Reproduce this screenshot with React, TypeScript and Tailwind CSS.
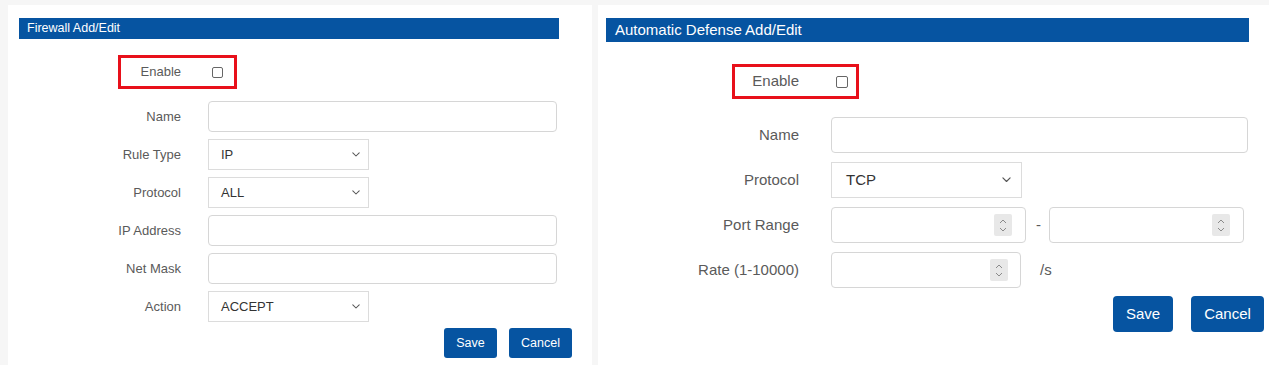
import type { ReactNode } from "react";

const font = { fontFamily: '"Liberation Sans", Arial, sans-serif' };

function Chevron({ size = 8 }: { size?: number }) {
  return (
    <svg width={size} height={size * 0.6} viewBox="0 0 10 6" fill="none">
      <path d="M1 1l4 4 4-4" stroke="#555" strokeWidth="1.3" strokeLinecap="round" strokeLinejoin="round" />
    </svg>
  );
}

function Spinner() {
  return (
    <span className="flex h-[22px] w-[18px] flex-col items-center justify-center gap-[3px] rounded-[2px] bg-[#e8e8e8]">
      <svg width="8" height="5" viewBox="0 0 8 5" fill="none">
        <path d="M1 4l3-3 3 3" stroke="#8a8a8a" strokeWidth="1" />
      </svg>
      <svg width="8" height="5" viewBox="0 0 8 5" fill="none">
        <path d="M1 1l3 3 3-3" stroke="#8a8a8a" strokeWidth="1" />
      </svg>
    </span>
  );
}

function SmallRow({ label, children }: { label: string; children: ReactNode }) {
  return (
    <div className="flex h-[31px] items-center">
      <div className="w-[162px] text-right text-[13px] text-[#5a5a5a]">{label}</div>
      <div className="ml-[27px] flex h-full items-center">{children}</div>
    </div>
  );
}

function BigRow({ label, children }: { label: string; children: ReactNode }) {
  return (
    <div className="flex h-[36px] items-center">
      <div className="w-[193px] text-right text-[15px] text-[#5a5a5a]">{label}</div>
      <div className="ml-[32px] flex h-full items-center">{children}</div>
    </div>
  );
}

function FirewallPanel() {
  const input = "h-full w-[349px] rounded-[4px] border border-[#d6d6d6] bg-white";
  const select =
    "flex h-full w-[161px] items-center justify-between border border-[#dcdcdc] bg-white pl-[12px] pr-[8px] text-[13px] text-[#333]";

  return (
    <div className="flex h-full w-[584px] flex-col bg-white pl-[11px] pr-[20px] pt-[13px]">
      <div className="flex h-[21px] w-[540px] items-center bg-[#0654a1] pl-[8px] text-[12.5px] text-white">
        Firewall Add/Edit
      </div>

      <div className="ml-[99px] mt-[16px] flex h-[34px] w-[119px] items-center border-[3px] border-[#e8101a]">
        <span className="w-[60px] text-right text-[13px] text-[#5a5a5a]">Enable</span>
        <span className="ml-[31px] h-[11px] w-[11px] rounded-[2px] border border-[#666] bg-white" />
      </div>

      <div className="mt-[12px] flex flex-col gap-[7px]">
        <SmallRow label="Name">
          <div className={input} />
        </SmallRow>
        <SmallRow label="Rule Type">
          <div className={select}>
            IP
            <Chevron />
          </div>
        </SmallRow>
        <SmallRow label="Protocol">
          <div className={select}>
            ALL
            <Chevron />
          </div>
        </SmallRow>
        <SmallRow label="IP Address">
          <div className={input} />
        </SmallRow>
        <SmallRow label="Net Mask">
          <div className={input} />
        </SmallRow>
        <SmallRow label="Action">
          <div className={select}>
            ACCEPT
            <Chevron />
          </div>
        </SmallRow>
      </div>

      <div className="mt-[6px] flex justify-end gap-[12px]">
        <button type="button" className="h-[30px] w-[53px] rounded-[3px] bg-[#0654a1] text-[12.5px] text-white">
          Save
        </button>
        <button type="button" className="h-[30px] w-[63px] rounded-[3px] bg-[#0654a1] text-[12.5px] text-white">
          Cancel
        </button>
      </div>
    </div>
  );
}

function DefensePanel() {
  const box = "flex h-full items-center justify-end rounded-[4px] border border-[#d6d6d6] bg-white";

  return (
    <div className="flex h-full flex-1 flex-col bg-white pl-[8px] pr-[5px] pt-[13px]">
      <div className="flex h-[24px] w-[643px] items-center bg-[#0654a1] pl-[9px] text-[15px] text-white">
        Automatic Defense Add/Edit
      </div>

      <div className="ml-[126px] mt-[22px] flex h-[35px] w-[127px] items-center border-[3px] border-[#e8101a]">
        <span className="w-[64px] text-right text-[15px] text-[#5a5a5a]">Enable</span>
        <span className="ml-[37px] h-[12px] w-[12px] rounded-[2px] border border-[#666] bg-white" />
      </div>

      <div className="mt-[18px] flex flex-col gap-[9px]">
        <BigRow label="Name">
          <div className="h-full w-[417px] rounded-[4px] border border-[#d6d6d6] bg-white" />
        </BigRow>
        <BigRow label="Protocol">
          <div className="flex h-full w-[191px] items-center justify-between border border-[#dcdcdc] bg-white pl-[14px] pr-[10px] text-[15px] text-[#333]">
            TCP
            <Chevron size={9} />
          </div>
        </BigRow>
        <BigRow label="Port Range">
          <div className={`${box} w-[195px] pr-[13px]`}>
            <Spinner />
          </div>
          <span className="ml-[10px] mr-[8px] text-[15px] text-[#5a5a5a]">-</span>
          <div className={`${box} w-[195px] pr-[13px]`}>
            <Spinner />
          </div>
        </BigRow>
        <BigRow label="Rate (1-10000)">
          <div className={`${box} w-[190px] pr-[12px]`}>
            <Spinner />
          </div>
          <span className="ml-[19px] text-[15px] text-[#5a5a5a]">/s</span>
        </BigRow>
      </div>

      <div className="mt-[8px] flex justify-end gap-[18px]">
        <button type="button" className="h-[36px] w-[60px] rounded-[4px] bg-[#0654a1] text-[15px] text-white">
          Save
        </button>
        <button type="button" className="h-[36px] w-[73px] rounded-[4px] bg-[#0654a1] text-[15px] text-white">
          Cancel
        </button>
      </div>
    </div>
  );
}

export default function App() {
  return (
    <div className="flex h-[365px] w-[1269px] gap-[6px] bg-[#f6f6f6] pl-[8px] pt-[5px]" style={font}>
      <FirewallPanel />
      <DefensePanel />
    </div>
  );
}
